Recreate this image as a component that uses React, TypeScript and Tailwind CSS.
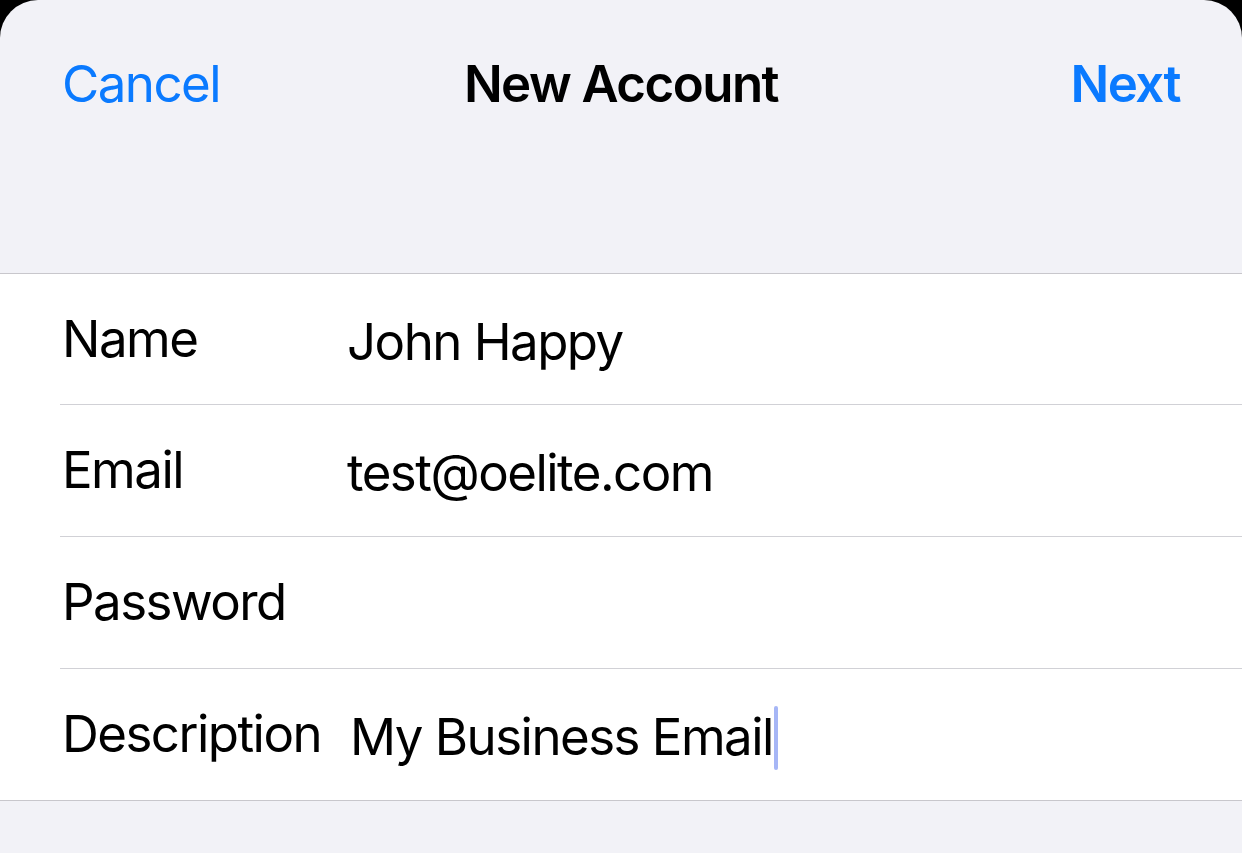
const rows = [
  { label: 'Name', value: 'John Happy', height: 'h-[131px]' },
  { label: 'Email', value: 'test@oelite.com', height: 'h-[132px]' },
  { label: 'Password', value: '', height: 'h-[132px]' },
  { label: 'Description', value: 'My Business Email', height: 'h-[131px]', focused: true },
]

export default function App() {
  return (
    <div className="h-[853px] w-[1242px] overflow-hidden bg-black font-['Inter',sans-serif] text-[51px] tracking-[-0.03em]">
      <div className="h-full rounded-t-[38px] bg-[#f2f2f7]">
        <header className="h-[274px] border-b border-[#c8c7cc]">
          <nav className="grid grid-cols-[1fr_auto_1fr] items-center px-[62px] pt-[46px]">
            <button className="justify-self-start text-[#0a7aff]">Cancel</button>
            <h1 className="font-semibold text-black">New Account</h1>
            <button className="justify-self-end font-semibold text-[#0a7aff]">Next</button>
          </nav>
        </header>
        <section className="border-b border-[#c8c7cc] bg-white pl-[60px]">
          {rows.map((row, index) => (
            <div
              key={row.label}
              className={`flex items-center ${row.height} ${index < rows.length - 1 ? 'border-b border-[#d1d1d6]' : ''}`}
            >
              <span className="w-[287px] shrink-0 pl-[2px] text-black">{row.label}</span>
              <span className={`flex items-center pt-[6px] text-black ${row.focused ? 'pl-[3px]' : ''}`}>
                {row.value}
                {row.focused && (
                  <span className="ml-[1px] h-[64px] w-[4px] rounded-full bg-[#a6b6f6]" />
                )}
              </span>
            </div>
          ))}
        </section>
      </div>
    </div>
  )
}
